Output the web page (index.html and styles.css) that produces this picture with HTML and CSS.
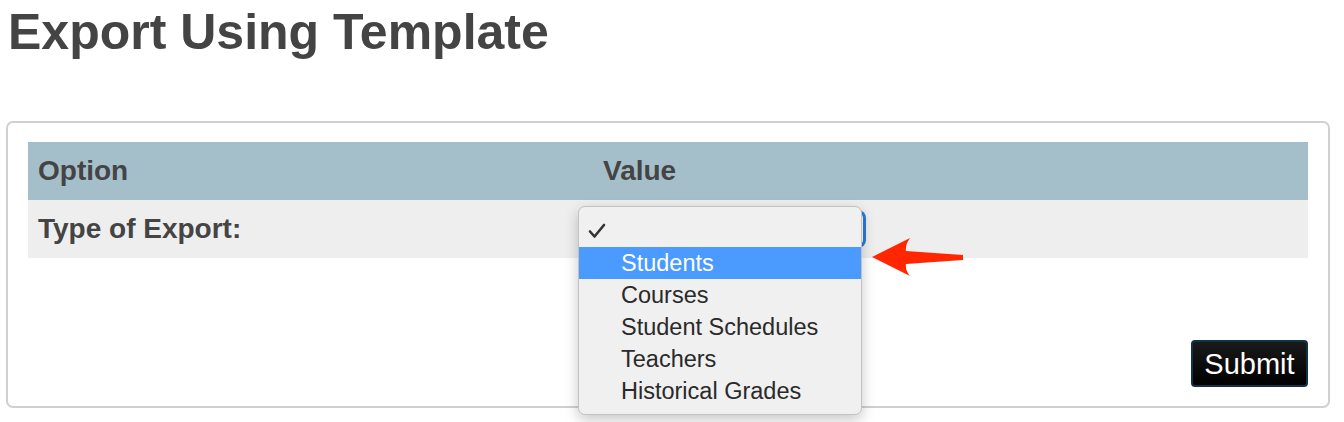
FILE: index.html
```html
<!DOCTYPE html>
<html>
<head>
<meta charset="utf-8">
<link rel="stylesheet" href="styles.css">
</head>
<body>
<h1 class="title">Export Using Template</h1>
<div class="panel">
  <table class="opts">
    <thead>
      <tr><th class="c1">Option</th><th>Value</th></tr>
    </thead>
    <tbody>
      <tr>
        <td class="c1 label">Type of Export:</td>
        <td class="val">
          <div class="select"></div>
          <div class="menu">
            <div class="item checked">
              <svg class="check" width="18" height="16" viewBox="0 0 18 16"><path d="M2 8.5 L6.5 13.5 L16 2" fill="none" stroke="#333" stroke-width="2.6" stroke-linecap="round" stroke-linejoin="round"/></svg>
            </div>
            <div class="item hl">Students</div>
            <div class="item">Courses</div>
            <div class="item">Student Schedules</div>
            <div class="item">Teachers</div>
            <div class="item">Historical Grades</div>
          </div>
          <svg class="arrow" width="96" height="44" viewBox="0 0 96 44">
            <path d="M2 21 L40 2 Q35 9 36 15 Q64 17 93 19 L93 24 Q64 26 36 28 Q35 34 40 40 Z" fill="#ff2600"/>
          </svg>
        </td>
      </tr>
    </tbody>
  </table>
  <div class="actions">
    <button class="submit">Submit</button>
  </div>
</div>
</body>
</html>
```
FILE: styles.css
```css
html, body {
  margin: 0;
  padding: 0;
  background: #fff;
}
body {
  font-family: "Liberation Sans", Arial, sans-serif;
  color: #444;
  padding: 0 14px 15px 6px;
}
.title {
  margin: 7px 0 0 2px;
  font-size: 50px;
  line-height: 50px;
  font-weight: bold;
  color: #444;
}
.panel {
  margin-top: 64px;
  border: 2px solid #d0d0d0;
  border-radius: 7px;
  padding: 19px 20px 19px 20px;
  display: flex;
  flex-direction: column;
}
.opts {
  width: 100%;
  border-collapse: collapse;
  font-size: 28px;
}
.opts th, .opts td {
  height: 58px;
  padding: 0 10px;
  text-align: left;
  font-weight: bold;
  color: #444;
  vertical-align: middle;
}
.opts thead tr {
  background: #a4bfca;
}
.opts tbody tr {
  background: #eeeeee;
}
.c1 {
  width: 545px;
}
.val {
  position: relative;
}
.select {
  position: absolute;
  left: -10px;
  top: 13px;
  width: 280px;
  height: 32px;
  border-radius: 5px;
  box-shadow: 0 0 0 3px #2b7bd6;
  background: #fff;
}
.menu {
  position: absolute;
  left: -15px;
  top: 6px;
  width: 282px;
  padding: 8px 0 7px 0;
  background: #f0f0f0;
  border: 1px solid #c2c2c2;
  border-radius: 7px;
  box-shadow: 0 5px 14px rgba(0, 0, 0, 0.22);
  z-index: 2;
}
.item {
  height: 32px;
  line-height: 32px;
  padding-left: 42px;
  font-size: 23.5px;
  font-weight: normal;
  color: #2a2a2a;
  white-space: nowrap;
}
.item.checked {
  position: relative;
}
.check {
  position: absolute;
  left: 9px;
  top: 8px;
}
.item.hl {
  background: #4a9bfd;
  color: #fff;
}
.arrow {
  position: absolute;
  left: 277px;
  top: 36px;
  z-index: 3;
}
.actions {
  display: flex;
  justify-content: flex-end;
  margin-top: 82px;
}
.submit {
  width: 117px;
  height: 47px;
  background: linear-gradient(#1a1a1a, #000);
  border: 2px solid #0d3446;
  border-radius: 4px;
  color: #fff;
  font-family: "Liberation Sans", Arial, sans-serif;
  font-size: 29px;
  padding: 0;
  line-height: 40px;
}
```
